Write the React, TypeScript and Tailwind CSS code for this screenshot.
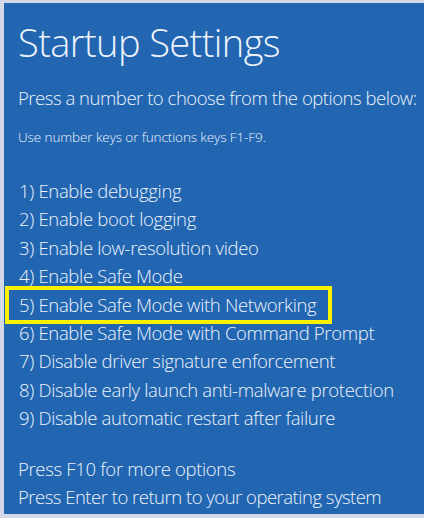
import React, { FC } from "react";

const options = [
  "1) Enable debugging",
  "2) Enable boot logging",
  "3) Enable low-resolution video",
  "4) Enable Safe Mode",
  "5) Enable Safe Mode with Networking",
  "6) Enable Safe Mode with Command Prompt",
  "7) Disable driver signature enforcement",
  "8) Disable early launch anti-malware protection",
  "9) Disable automatic restart after failure",
];

const App: FC = () => {
  return (
    <div className="w-[424px] h-[518px] bg-[#d3d9e6] pt-[3px] pl-[4px] pb-[4px] overflow-hidden">
      <div
        className="h-full bg-[#2266b2] text-[#eef3fa] pl-[14px] flex flex-col whitespace-nowrap"
        style={{ fontFamily: '"Open Sans", "Noto Sans", sans-serif' }}
      >
        <h1 className="mt-[15px] text-[38px] leading-[48px] font-light tracking-[-0.6px]">
          Startup Settings
        </h1>
        <p className="mt-[18px] text-[18.5px] leading-[28px] font-[350] tracking-[-0.47px]">
          Press a number to choose from the options below:
        </p>
        <p className="mt-[15px] text-[13.5px] leading-[20px] font-[350] tracking-[-0.1px]">
          Use number keys or functions keys F1-F9.
        </p>

        <ul className="mt-[30px] text-[18.5px] leading-[28.4px] font-[350] tracking-[-0.33px]">
          {options.map((o, i) => (
            <li key={o} className="relative pl-[1px]">
              {o}
              {i === 4 && (
                <span className="absolute left-[-13px] top-[-4.5px] w-[327px] h-[37.5px] border-[4.5px] border-[#fff200]" />
              )}
            </li>
          ))}
        </ul>

        <div className="mt-[22.5px] text-[18.5px] leading-[28px] font-[350] tracking-[-0.33px]">
          <p>Press F10 for more options</p>
          <p className="tracking-[-0.5px]">Press Enter to return to your operating system</p>
        </div>
      </div>
    </div>
  );
};

export default App;
